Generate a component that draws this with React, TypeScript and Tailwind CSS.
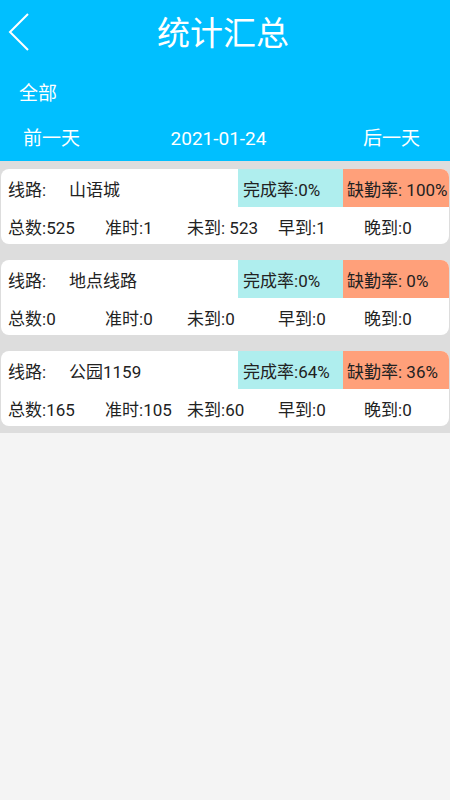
const font = { fontFamily: 'Roboto, "Noto Sans CJK SC", sans-serif' };

type Row = {
  name: string;
  done: string;
  absent: string;
  total: number;
  onTime: number;
  missing: string;
  early: number;
  late: number;
};

const rows: Row[] = [
  { name: "山语城", done: "0%", absent: "100%", total: 525, onTime: 1, missing: " 523", early: 1, late: 0 },
  { name: "地点线路", done: "0%", absent: "0%", total: 0, onTime: 0, missing: "0", early: 0, late: 0 },
  { name: "公园1159", done: "64%", absent: "36%", total: 165, onTime: 105, missing: "60", early: 0, late: 0 },
];

function LineCard({ row }: { row: Row }) {
  return (
    <div className="mx-[1px] bg-white rounded-[8px] overflow-hidden text-[17px] text-[#222]">
      <div className="flex h-[38px]">
        <div className="flex-1 flex items-center pl-[7px] pt-[5px]">
          <span className="w-[61px]">线路:</span>
          <span>{row.name}</span>
        </div>
        <div className="w-[105px] bg-[#afeeee] flex items-center pl-[5px] pt-[5px] whitespace-nowrap">
          完成率:{row.done}
        </div>
        <div className="w-[106px] bg-[#ffa07a] flex items-center pl-[4px] pt-[5px] whitespace-nowrap">
          缺勤率: {row.absent}
        </div>
      </div>
      <div className="flex h-[37px] items-center pl-[7px] pt-[7px] whitespace-pre">
        <span className="w-[97px]">总数:{row.total}</span>
        <span className="w-[82px]">准时:{row.onTime}</span>
        <span className="w-[91px]">未到:{row.missing}</span>
        <span className="w-[86px]">早到:{row.early}</span>
        <span>晚到:{row.late}</span>
      </div>
    </div>
  );
}

export default function App() {
  return (
    <div className="w-[450px] h-[800px] bg-[#f4f4f4]" style={font}>
      {/* header */}
      <div className="h-[161px] bg-[#00bfff] text-white flex flex-col">
        <div className="h-[66px] grid grid-cols-[60px_1fr_60px] items-center">
          <svg width="40" height="66" viewBox="0 0 40 66">
            <polyline points="28,14 10,32 28,50" fill="none" stroke="white" strokeWidth="2" />
          </svg>
          <div className="text-center text-[33px] leading-none pr-[4px]">统计汇总</div>
          <div />
        </div>
        <div className="h-[54px] flex items-center pl-[19px] pt-[2px] text-[19px]">全部</div>
        <div className="h-[36px] flex items-center justify-between pl-[23px] pr-[30px] pt-[2px] text-[19px]">
          <span>前一天</span>
          <span className="pr-[6px]">2021-01-24</span>
          <span>后一天</span>
        </div>
      </div>

      {/* list */}
      <div className="bg-[#dddddd] pt-[8px] pb-[7px] flex flex-col gap-[16px]">
        {rows.map((r) => (
          <LineCard key={r.name} row={r} />
        ))}
      </div>
    </div>
  );
}
